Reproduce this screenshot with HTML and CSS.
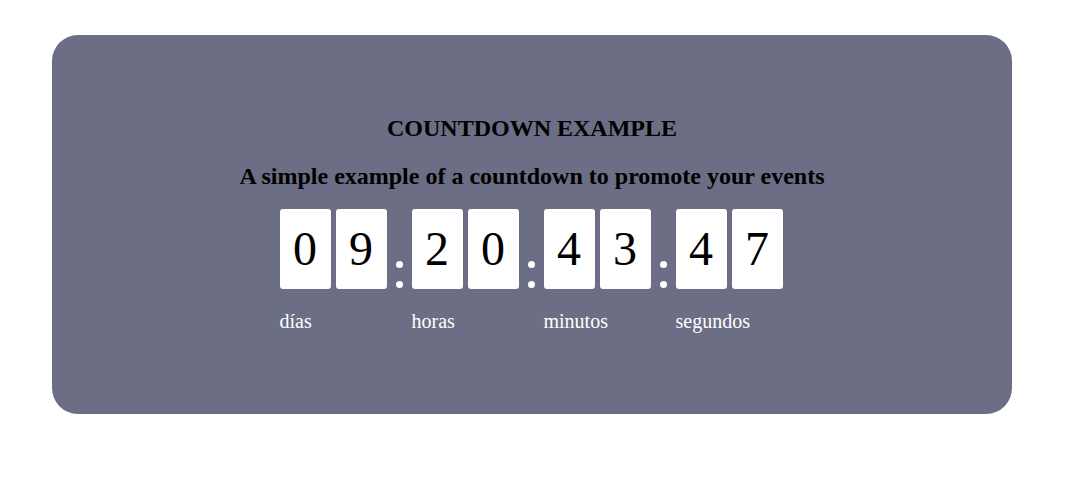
FILE: index.html
```html
<!DOCTYPE html>
<html lang="es">
<head>
<meta charset="utf-8">
<title>Countdown</title>
<link rel="stylesheet" href="styles.css">
</head>
<body>
<main class="card">
  <h2 class="title">COUNTDOWN EXAMPLE</h2>
  <h2 class="subtitle">A simple example of a countdown to promote your events</h2>
  <div class="timer">
    <div class="unit">
      <div class="digits"><span class="digit">0</span><span class="digit">9</span></div>
      <div class="label">días</div>
    </div>
    <div class="colon"><span class="dot"></span><span class="dot"></span></div>
    <div class="unit">
      <div class="digits"><span class="digit">2</span><span class="digit">0</span></div>
      <div class="label">horas</div>
    </div>
    <div class="colon"><span class="dot"></span><span class="dot"></span></div>
    <div class="unit">
      <div class="digits"><span class="digit">4</span><span class="digit">3</span></div>
      <div class="label">minutos</div>
    </div>
    <div class="colon"><span class="dot"></span><span class="dot"></span></div>
    <div class="unit">
      <div class="digits"><span class="digit">4</span><span class="digit">7</span></div>
      <div class="label">segundos</div>
    </div>
  </div>
</main>
</body>
</html>
```

FILE: styles.css
```css
html, body {
  margin: 0;
  padding: 0;
  background: #ffffff;
  font-family: "Liberation Serif", "Times New Roman", serif;
}

.card {
  box-sizing: border-box;
  width: 960px;
  height: 379px;
  margin: 35px 0 0 52px;
  padding-top: 60px;
  background: #6b6e84;
  border-radius: 26px;
  text-align: center;
}

.title,
.subtitle {
  margin: 20px 0;
  font-size: 24px;
  font-weight: bold;
  color: #000;
}

.subtitle {
  margin-top: 21px;
  margin-bottom: 19px;
}

.timer {
  display: flex;
  justify-content: center;
  align-items: flex-start;
  padding-right: 2px;
}

.unit {
  display: flex;
  flex-direction: column;
  align-items: flex-start;
}

.digits {
  display: flex;
  gap: 5px;
}

.digit {
  width: 51px;
  height: 80px;
  background: #fff;
  border-radius: 3px;
  font-size: 48px;
  line-height: 80px;
  text-align: center;
  color: #000;
}

.colon {
  width: 25px;
  height: 80px;
  display: flex;
  flex-direction: column;
  justify-content: flex-end;
  align-items: center;
  gap: 13px;
  padding-bottom: 1px;
  box-sizing: border-box;
}

.dot {
  width: 7px;
  height: 7px;
  border-radius: 50%;
  background: #fff;
}

.label {
  margin-top: 21px;
  font-size: 20px;
  color: #fff;
}
```
